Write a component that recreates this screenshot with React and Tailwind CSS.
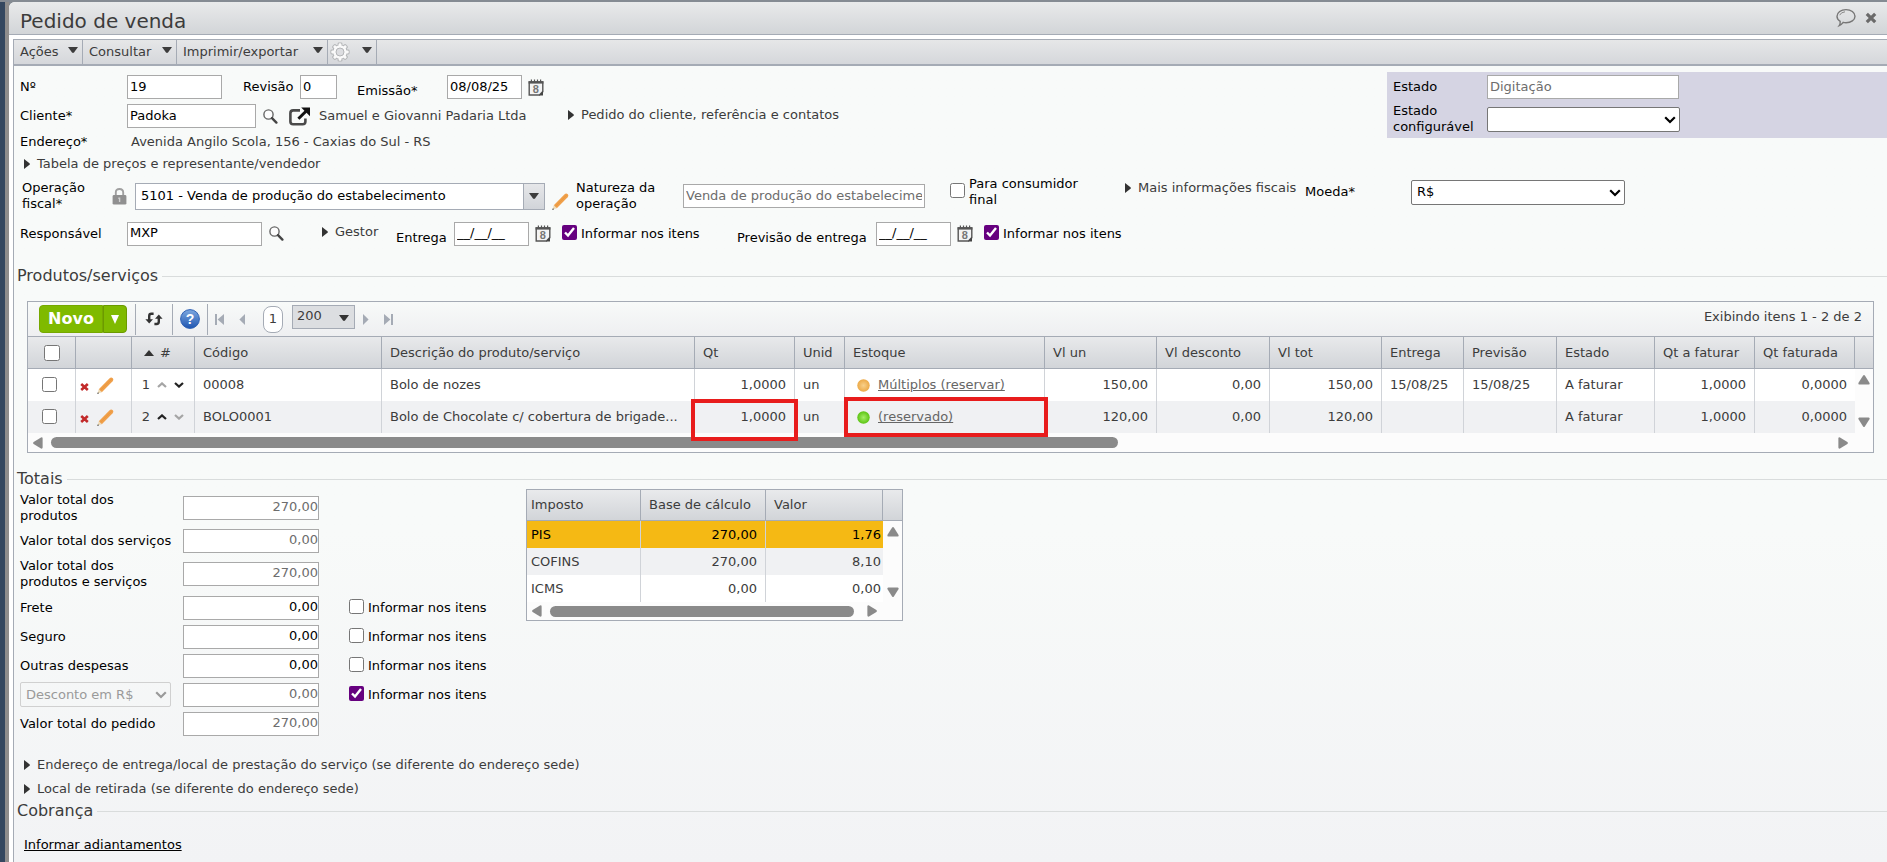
import { useState } from 'react';

const taxes = [
  { name: 'PIS', base: '270,00', value: '1,76' },
  { name: 'COFINS', base: '270,00', value: '8,10' },
  { name: 'ICMS', base: '0,00', value: '0,00' },
];

const items = [
  {
    id: 1, code: '00008', description: 'Bolo de nozes', qty: '1,0000', unit: 'un',
    stock: 'Múltiplos (reservar)', reserved: false, price: '150,00', discount: '0,00', total: '150,00',
    delivery: '15/08/25', forecast: '15/08/25', status: 'A faturar', toBill: '1,0000', billed: '0,0000',
  },
  {
    id: 2, code: 'BOLO0001', description: 'Bolo de Chocolate c/ cobertura de brigade...', qty: '1,0000', unit: 'un',
    stock: '(reservado)', reserved: true, price: '120,00', discount: '0,00', total: '120,00',
    delivery: '', forecast: '', status: 'A faturar', toBill: '1,0000', billed: '0,0000',
  },
];

const columns = [
  ['Código', 'w-[187px]'],
  ['Descrição do produto/serviço', ''],
  ['Qt', 'w-[100px]'],
  ['Unid', 'w-[50px]'],
  ['Estoque', 'w-[200px]'],
  ['Vl un', 'w-[112px]'],
  ['Vl desconto', 'w-[113px]'],
  ['Vl tot', 'w-[112px]'],
  ['Entrega', 'w-[82px]'],
  ['Previsão', 'w-[93px]'],
  ['Estado', 'w-[98px]'],
  ['Qt a faturar', 'w-[100px]'],
  ['Qt faturada', 'w-[100px]'],
];

const totals = [
  { id: 'frete', label: 'Frete', value: '0,00' },
  { id: 'seguro', label: 'Seguro', value: '0,00' },
  { id: 'outras', label: 'Outras despesas', value: '0,00' },
];

/* Icons */
function Down({ className = 'text-[#3c3c3c]' }) {
  return (
    <svg width="10" height="6" viewBox="0 0 10 6" className={className}>
      <path d="M0 0h10L6 5.5Q5 6.3 4 5.5Z" fill="currentColor" />
    </svg>
  );
}

function Right() {
  return (
    <svg width="6" height="10" viewBox="0 0 6 10" className="shrink-0">
      <path d="M0 0L5.5 4.2Q6.2 5 5.5 5.8L0 10Z" fill="#333" />
    </svg>
  );
}

function ScrollArrow({ dir }) {
  const angle = { up: 0, right: 90, down: 180, left: 270 }[dir];
  return (
    <svg width="12" height="12" viewBox="0 0 12 12">
      <path
        d="M5.1 1.6Q6 .4 6.9 1.6L11.6 9Q12 10.6 10.6 10.6H1.4Q0 10.6 .4 9Z"
        fill="#8a8a8a"
        transform={`rotate(${angle} 6 6)`}
      />
    </svg>
  );
}

function SearchIcon() {
  return (
    <svg width="15" height="15" viewBox="0 0 15 15" className="block">
      <circle cx="5.5" cy="5.5" r="4.6" fill="#fdfdfd" stroke="#666" strokeWidth="1.4" />
      <path d="M9 9.2L13.4 13.6" stroke="#444" strokeWidth="2.4" strokeLinecap="round" />
    </svg>
  );
}

function OpenIcon() {
  return (
    <svg width="22" height="19" viewBox="0 0 22 19" className="block">
      <path d="M11 3.4H4.2Q1.4 3.4 1.4 6.2V14.4Q1.4 17.2 4.2 17.2H13.6Q16.4 17.2 16.4 14.4V11.4" fill="none" stroke="#4a4a4a" strokeWidth="2.6" />
      <path d="M9.4 11.8L17 4.2" stroke="#111" strokeWidth="3" />
      <path d="M12.2 .6H21V9.2Z" fill="#111" />
    </svg>
  );
}

function CalendarIcon() {
  return (
    <svg width="16" height="17" viewBox="0 0 16 17" className="block">
      <path d="M1.2 3H14.8V12.6L11.4 16H1.2Z" fill="#f4f4f4" stroke="#555" strokeWidth="1.4" />
      <path d="M.6 2.2H15.4V4.6H.6Z" fill="#555" />
      <path d="M3.4 .4V3M6.5 .4V3M9.5 .4V3M12.6 .4V3" stroke="#555" strokeWidth="1.2" />
      <path d="M15 12L11 16.4H15Z" fill="#444" />
      <text x="7.8" y="13.6" textAnchor="middle" fontSize="11" fontWeight="bold" fill="#777" fontFamily="Liberation Sans, sans-serif">8</text>
    </svg>
  );
}

function PencilIcon() {
  return (
    <svg width="17" height="17" viewBox="0 0 17 17" className="block">
      <path d="M1.8 12.2L12.6 1.2Q14.2 -.2 15.8 1.2Q17 2.6 15.6 4.2L4.8 15.2Z" fill="#f0a04a" />
      <path d="M3.2 13.6L14.6 2.2" stroke="#ea973f" strokeWidth="1" />
      <path d="M1.8 12.2L4.8 15.2L.6 16.6Z" fill="#ecd9b5" />
      <path d="M.9 15.2L2.1 16.2L.2 16.9Z" fill="#333" />
    </svg>
  );
}

function LockIcon() {
  return (
    <svg width="15" height="17" viewBox="0 0 15 17" className="shrink-0">
      <path d="M3.8 8V4.6Q3.8 1 7.5 1Q11.2 1 11.2 4.6V8" fill="none" stroke="#a0a0a0" strokeWidth="1.9" />
      <rect x=".6" y="7" width="13.8" height="9.6" rx="1.4" fill="#909090" />
      <path d="M6.3 9.6H8.3V14H6.9V11H6.3Z" fill="#d0d0d0" />
    </svg>
  );
}

function GearIcon() {
  const teeth = [0, 45, 90, 135, 180, 225, 270, 315];
  return (
    <svg width="20" height="20" viewBox="0 0 20 20">
      {teeth.map(a => (
        <rect key={a} x="7.6" y=".4" width="4.8" height="5" rx="1.4" fill="#b4b6b8" transform={`rotate(${a} 10 10)`} />
      ))}
      <circle cx="10" cy="10" r="7.6" fill="#b4b6b8" />
      {teeth.map(a => (
        <rect key={a} x="8.6" y="1.3" width="2.8" height="5" rx="1" fill="#fafafa" transform={`rotate(${a} 10 10)`} />
      ))}
      <circle cx="10" cy="10" r="6.7" fill="#fafafa" />
      <circle cx="10" cy="10" r="4" fill="#dddee1" stroke="#b4b6b8" />
    </svg>
  );
}

function RefreshIcon() {
  return (
    <svg width="18" height="14" viewBox="0 0 18 14">
      <path d="M8.6 1.8H6.4Q4.2 1.8 4.2 4V8.4" fill="none" stroke="#333" strokeWidth="2.4" />
      <path d="M.4 7.2H8L4.2 11.6Z" fill="#333" />
      <path d="M9.4 12H11.6Q13.8 12 13.8 9.8V5.6" fill="none" stroke="#333" strokeWidth="2.4" />
      <path d="M10 6.8H17.6L13.8 2.4Z" fill="#333" />
    </svg>
  );
}

function HelpIcon() {
  return (
    <svg width="20" height="20" viewBox="0 0 20 20">
      <defs>
        <linearGradient id="help" x1="0" y1="0" x2="0" y2="1">
          <stop offset="0" stopColor="#7fa9e0" />
          <stop offset="1" stopColor="#1f55b0" />
        </linearGradient>
      </defs>
      <circle cx="10" cy="10" r="9.4" fill="url(#help)" stroke="#2f62b5" />
      <text x="10" y="15" textAnchor="middle" fontSize="14" fontWeight="bold" fill="#fff" fontFamily="Liberation Sans, sans-serif">?</text>
    </svg>
  );
}

function PagerIcon({ flip, bar }) {
  return (
    <svg width="9" height="11" viewBox="0 0 9 11" className={flip ? 'rotate-180' : ''}>
      {bar && <rect x="0" y="0" width="2" height="11" fill="#a5abb5" />}
      <path d={bar ? 'M9 0V11L2.6 5.5Z' : 'M7 0V11L1.4 5.5Z'} fill="#a5abb5" />
    </svg>
  );
}

function Chevron({ down, strong }) {
  return (
    <svg width="10" height="6" viewBox="0 0 10 6" className={strong ? 'text-[#222]' : 'text-[#a5a5a5]'}>
      <path d={down ? 'M1 1L5 4.6L9 1' : 'M1 5L5 1.4L9 5'} fill="none" stroke="currentColor" strokeWidth="2.2" />
    </svg>
  );
}

/* Form parts */
function Field({ className = '', ...props }) {
  return (
    <input
      type="text"
      className={`h-6 shrink-0 border border-[#a9a9a9] bg-white px-0.5 pb-0.5 text-black disabled:text-[#6d6d6d] ${className}`}
      {...props}
    />
  );
}

function Select({ className = '', children, ...props }) {
  return (
    <span className={`relative shrink-0 text-black has-disabled:text-[#9a9a9a] ${className}`}>
      <select
        className="block h-[25px] w-full appearance-none rounded-xs border border-[#767676] bg-white pl-[5px] disabled:border-[#d0d0d0] disabled:bg-transparent"
        {...props}
      >
        {children}
      </select>
      <svg width="12" height="8" viewBox="0 0 12 8" className="pointer-events-none absolute right-1 top-[9px]">
        <path d="M1.2 1.2L6 6L10.8 1.2" fill="none" stroke="currentColor" strokeWidth="2.2" />
      </svg>
    </span>
  );
}

function Label({ low, className = '', ...props }) {
  return <label className={`shrink-0 leading-4 text-black ${low ? 'pt-2' : ''} ${className}`} {...props} />;
}

function Check({ id, label, checked = false, className = '' }) {
  const [on, setOn] = useState(checked);
  return (
    <span className={`flex shrink-0 items-center gap-1 ${className}`}>
      <input id={id} type="checkbox" checked={on} onChange={e => setOn(e.target.checked)} className="mb-[3px] size-[15px] shrink-0 accent-[#66007f]" />
      <label htmlFor={id} className="leading-4 text-black">{label}</label>
    </span>
  );
}

function Expander({ children, className = '' }) {
  return (
    <button className={`flex shrink-0 items-center gap-[7px] whitespace-nowrap ${className}`}>
      <Right />
      {children}
    </button>
  );
}

function IconButton({ label, children, className = '' }) {
  return <button aria-label={label} className={`shrink-0 ${className}`}>{children}</button>;
}

function Legend({ children }) {
  return (
    <h2 className="flex h-5 items-center gap-1 pl-[3px] text-base">
      {children}
      <span className="h-px flex-1 bg-[#d9dcdc]" />
    </h2>
  );
}

function MenuButton({ children, className }) {
  return (
    <button className={`flex items-center justify-between border-r border-[#a5abb5] pl-1.5 pr-1 ${className}`}>
      {children}
      <Down className="mb-1 text-[#3c3c3c]" />
    </button>
  );
}

function OrderHeader() {
  return (
    <div>
      <div className="flex pt-1.5">
        <div className="flex-1 pl-1.5 pt-[3px]">
          <div className="flex h-6 items-center">
            <Label htmlFor="numero" className="w-[107px]">Nº</Label>
            <Field id="numero" defaultValue="19" className="w-[95px]" />
            <Label htmlFor="revisao" className="ml-[21px] w-[57px]">Revisão</Label>
            <Field id="revisao" defaultValue="0" className="w-[37px]" />
            <Label low htmlFor="emissao" className="ml-5 w-[90px]">Emissão*</Label>
            <Field id="emissao" defaultValue="08/08/25" className="w-[75px]" />
            <IconButton label="Calendário" className="ml-1.5"><CalendarIcon /></IconButton>
          </div>
          <div className="mt-[5px] flex h-6 items-center">
            <Label htmlFor="cliente" className="w-[107px]">Cliente*</Label>
            <Field id="cliente" defaultValue="Padoka" className="w-[129px]" />
            <IconButton label="Pesquisar cliente" className="ml-[7px]"><SearchIcon /></IconButton>
            <IconButton label="Abrir cliente" className="ml-[11px]"><OpenIcon /></IconButton>
            <span className="ml-2 w-[249px]">Samuel e Giovanni Padaria Ltda</span>
            <Expander className="pb-0.5">Pedido do cliente, referência e contatos</Expander>
          </div>
          <div className="mt-1 flex h-5 items-center">
            <span className="w-[111px] text-black">Endereço*</span>
            <span>Avenida Angilo Scola, 156 - Caxias do Sul - RS</span>
          </div>
          <Expander className="ml-1 h-6">Tabela de preços e representante/vendedor</Expander>
        </div>
        <div className="h-[66px] w-[500px] bg-[#d5d4e3] px-1.5 pt-[3px]">
          <div className="flex h-6 items-center">
            <Label htmlFor="estado" className="w-[94px]">Estado</Label>
            <Field id="estado" disabled defaultValue="Digitação" className="w-[192px]" />
          </div>
          <div className="mt-1 flex h-8 items-center">
            <Label htmlFor="configuravel" className="w-[94px]">Estado configurável</Label>
            <Select id="configuravel" className="w-[193px]">
              <option></option>
            </Select>
          </div>
        </div>
      </div>

      <div className="flex h-10 items-center pl-2">
        <Label htmlFor="operacao" className="w-[90px]">Operação<br />fiscal*</Label>
        <LockIcon />
        <div className="ml-2 flex h-[27px] w-[410px] shrink-0 border border-[#a5abb5] bg-white">
          <input id="operacao" defaultValue="5101 - Venda de produção do estabelecimento" className="min-w-0 flex-1 px-[5px] text-black" />
          <button aria-label="Abrir lista" className="flex w-[21px] items-center justify-center border-l border-[#a5abb5] bg-linear-to-b from-[#e6e7e9] to-[#d1d4d9]">
            <Down />
          </button>
        </div>
        <IconButton label="Editar operação" className="ml-[7px] pt-2.5"><PencilIcon /></IconButton>
        <Label htmlFor="natureza" className="ml-[7px] w-[107px]">Natureza da operação</Label>
        <Field id="natureza" disabled defaultValue="Venda de produção do estabelecimento" className="w-[242px]" />
        <div className="flex items-center pb-2">
          <Check id="consumidor" label={<>Para consumidor<br />final</>} className="ml-[25px] w-[175px]" />
          <Expander className="w-[180px] pb-2">Mais informações fiscais</Expander>
          <Label htmlFor="moeda" className="w-[106px]">Moeda*</Label>
          <Select id="moeda" className="w-[214px]">
            <option>R$</option>
          </Select>
        </div>
      </div>

      <div className="mt-[5px] flex h-[25px] items-center pl-1.5">
        <Label htmlFor="responsavel" className="w-[107px]">Responsável</Label>
        <Field id="responsavel" defaultValue="MXP" className="w-[135px]" />
        <IconButton label="Pesquisar responsável" className="ml-[7px]"><SearchIcon /></IconButton>
        <Expander className="ml-[38px] w-[74px] pb-1">Gestor</Expander>
        <Label low htmlFor="entrega" className="w-[58px]">Entrega</Label>
        <Field id="entrega" defaultValue="__/__/__" className="w-[75px]" />
        <IconButton label="Calendário" className="ml-1.5"><CalendarIcon /></IconButton>
        <Check id="entrega-itens" checked label="Informar nos itens" className="ml-[11px] w-[175px]" />
        <Label low htmlFor="previsao" className="w-[139px]">Previsão de entrega</Label>
        <Field id="previsao" defaultValue="__/__/__" className="w-[75px]" />
        <IconButton label="Calendário" className="ml-1.5"><CalendarIcon /></IconButton>
        <Check id="previsao-itens" checked label="Informar nos itens" className="ml-[11px]" />
      </div>
    </div>
  );
}

function Toolbar() {
  return (
    <div className="flex h-[34px] items-center bg-linear-to-b from-[#f8faf9] to-[#eeeff1]">
      <div className="ml-[11px] flex h-7 text-base font-bold text-white">
        <button className="w-16 rounded-l-sm border border-[#76a800] bg-[#7fba00]">Novo</button>
        <button aria-label="Mais opções" className="flex w-6 items-center justify-center rounded-r-sm border border-[#6b9a00] bg-[#7fba00]">
          <svg width="8" height="9" viewBox="0 0 8 9"><path d="M0 0H8L4 9Z" fill="#fff" /></svg>
        </button>
      </div>
      <div className="ml-2 flex h-[31px] items-center">
        <button aria-label="Atualizar" className="flex h-full w-[37px] items-center justify-center border-l border-[#a5abb5]"><RefreshIcon /></button>
        <button aria-label="Ajuda" className="flex h-full w-[36px] items-center justify-center border-x border-[#a5abb5]"><HelpIcon /></button>
      </div>
      <button aria-label="Primeira página" className="ml-[7px]"><PagerIcon bar /></button>
      <button aria-label="Página anterior" className="ml-[14px]"><PagerIcon /></button>
      <span className="ml-4 flex h-[27px] w-5 items-center justify-center rounded-lg border border-[#a5abb5] bg-white">1</span>
      <div className="relative mb-1 ml-[9px]">
        <select aria-label="Itens por página" className="block h-6 w-[63px] appearance-none border border-[#a5abb5] bg-[#dcdee1] pb-0.5 pl-1">
          <option>200</option>
        </select>
        <Down className="pointer-events-none absolute right-1.5 top-2.5 text-[#333]" />
      </div>
      <button aria-label="Próxima página" className="ml-1.5"><PagerIcon flip /></button>
      <button aria-label="Última página" className="ml-[14px]"><PagerIcon flip bar /></button>
      <span className="ml-auto pb-1 pr-[11px]">Exibindo itens 1 - 2 de 2</span>
    </div>
  );
}

function ItemsGrid() {
  const td = 'border-r border-[#d0d3d8] px-2';
  return (
    <div className="mx-[13px] mt-[15px] border border-[#a5abb5] bg-[#fcfcfc]">
      <Toolbar />
      <table className="w-full table-fixed border-separate border-spacing-0 whitespace-nowrap">
        <thead>
          <tr className="h-[33px] bg-linear-to-b from-[#e9eaec] to-[#d1d4d8] text-left [&>th]:border-y [&>th]:border-r [&>th]:border-[#a5abb5] [&>th]:px-2 [&>th]:font-normal">
            <th className="w-12">
              <input type="checkbox" aria-label="Selecionar todos" className="ml-2 block size-4" />
            </th>
            <th className="w-14"></th>
            <th className="w-[63px]">
              <span className="flex items-center gap-1.5 pl-1">
                <svg width="10" height="6" viewBox="0 0 10 6"><path d="M0 6L5 0L10 6Z" fill="#333" /></svg>
                #
              </span>
            </th>
            {columns.map(([title, width]) => <th key={title} className={width}>{title}</th>)}
            <th className="w-[18px] border-r-0!"></th>
          </tr>
        </thead>
        <tbody>
          {items.map((item, index) => (
            <tr key={item.id} className="h-8 odd:bg-white even:bg-[#f0f1f3]">
              <td className={td}><input type="checkbox" aria-label={`Selecionar item ${item.id}`} className="mb-0.5 ml-1.5 block size-[15px]" /></td>
              <td className={td}>
                <span className="flex items-center gap-2 -ml-1">
                  <button aria-label="Excluir">
                    <svg width="9" height="8" viewBox="0 0 9 8" className="mt-1 block"><path d="M1.2 1L7.8 7M7.8 1L1.2 7" stroke="#c22a2a" strokeWidth="2.6" /></svg>
                  </button>
                  <button aria-label="Editar"><PencilIcon /></button>
                </span>
              </td>
              <td className={td}>
                <span className="flex items-center justify-center gap-[7px]">
                  {item.id}
                  <Chevron strong={index > 0} />
                  <Chevron down strong={index === 0} />
                </span>
              </td>
              <td className={td}>{item.code}</td>
              <td className={td}>{item.description}</td>
              <td className={`relative text-right ${td}`}>
                {item.qty}
                {item.reserved && <span className="pointer-events-none absolute -bottom-2 -left-1 -right-1 -top-0.5 z-10 border-4 border-[#e81c1c]" />}
              </td>
              <td className={td}>{item.unit}</td>
              <td className={`relative ${td}`}>
                <span className="flex items-center gap-2 pl-1">
                  <svg width="13" height="13" viewBox="0 0 13 13">
                    <defs>
                      <radialGradient id={`stock${item.id}`}>
                        <stop offset="0" stopColor={item.reserved ? '#a5ee66' : '#f8d08a'} />
                        <stop offset="1" stopColor={item.reserved ? '#5cc414' : '#ecaa48'} />
                      </radialGradient>
                    </defs>
                    <circle cx="6.5" cy="6.5" r="6.2" fill={`url(#stock${item.id})`} />
                  </svg>
                  <a href="#estoque" className="text-[#666] underline">{item.stock}</a>
                </span>
                {item.reserved && <span className="pointer-events-none absolute -bottom-1 -left-px -right-1 -top-1 z-10 border-4 border-[#e81c1c]" />}
              </td>
              <td className={`text-right ${td}`}>{item.price}</td>
              <td className={`text-right ${td}`}>{item.discount}</td>
              <td className={`text-right ${td}`}>{item.total}</td>
              <td className={td}>{item.delivery}</td>
              <td className={td}>{item.forecast}</td>
              <td className={td}>{item.status}</td>
              <td className={`text-right ${td}`}>{item.toBill}</td>
              <td className="px-2 text-right">{item.billed}</td>
              {index === 0 && (
                <td rowSpan={2} className="bg-[#fcfcfc]">
                  <span className="flex h-16 flex-col items-center justify-between py-[5px]">
                    <ScrollArrow dir="up" />
                    <ScrollArrow dir="down" />
                  </span>
                </td>
              )}
            </tr>
          ))}
        </tbody>
      </table>
      <div className="flex h-[19px] items-center pl-1 pr-6">
        <ScrollArrow dir="left" />
        <div className="mx-[7px] flex-1"><div className="h-[11px] w-3/5 rounded-full bg-[#8a8a8a]" /></div>
        <ScrollArrow dir="right" />
      </div>
    </div>
  );
}

function TaxTable() {
  return (
    <div className="w-[377px] self-start border border-[#a5abb5] bg-[#fcfcfc]">
      <table className="w-full table-fixed border-separate border-spacing-0">
        <thead>
          <tr className="h-[31px] bg-linear-to-b from-[#e9eaec] to-[#d1d4d8] text-left [&>th]:border-b [&>th]:border-r [&>th]:border-[#a5abb5] [&>th]:font-normal">
            <th className="w-[114px] pl-1">Imposto</th>
            <th className="w-[125px] pl-2">Base de cálculo</th>
            <th className="pl-2">Valor</th>
            <th className="w-[19px] border-r-0!"></th>
          </tr>
        </thead>
        <tbody>
          {taxes.map((tax, index) => (
            <tr key={tax.name} className="h-[27px] bg-white first:bg-[#f5b914] first:text-black even:bg-[#f0f1f3]">
              <td className="border-r border-[#d0d3d8] pl-1">{tax.name}</td>
              <td className="border-r border-[#d0d3d8] pr-2 text-right">{tax.base}</td>
              <td className="pr-0.5 text-right">{tax.value}</td>
              {index === 0 && (
                <td rowSpan={3} className="bg-[#fcfcfc]">
                  <span className="flex h-20 flex-col items-center justify-between py-1">
                    <ScrollArrow dir="up" />
                    <ScrollArrow dir="down" />
                  </span>
                </td>
              )}
            </tr>
          ))}
        </tbody>
      </table>
      <div className="flex h-[18px] items-center pl-1 pr-6">
        <ScrollArrow dir="left" />
        <div className="ml-[7px] mr-3 h-[11px] flex-1 rounded-full bg-[#8a8a8a]" />
        <ScrollArrow dir="right" />
      </div>
    </div>
  );
}

function Totals() {
  const amount = 'w-[136px] pr-0! text-right';
  return (
    <div className="flex">
      <div className="w-[512px] shrink-0 pl-1.5 pt-0.5">
        <div className="flex h-[33px] items-center">
          <Label htmlFor="total-produtos" className="w-[163px]">Valor total dos<br />produtos</Label>
          <Field id="total-produtos" disabled defaultValue="270,00" className={amount} />
        </div>
        <div className="flex h-[33px] items-center">
          <Label htmlFor="total-servicos" className="w-[163px]">Valor total dos serviços</Label>
          <Field id="total-servicos" disabled defaultValue="0,00" className={amount} />
        </div>
        <div className="mb-[3px] flex h-[33px] items-center">
          <Label htmlFor="total-geral" className="w-[163px]">Valor total dos<br />produtos e serviços</Label>
          <Field id="total-geral" disabled defaultValue="270,00" className={amount} />
        </div>
        {totals.map(row => (
          <div key={row.id} className="flex h-[29px] items-center">
            <Label htmlFor={row.id} className="w-[163px]">{row.label}</Label>
            <Field id={row.id} defaultValue={row.value} className={amount} />
            <Check id={`${row.id}-itens`} label="Informar nos itens" className="ml-[30px]" />
          </div>
        ))}
        <div className="flex h-[29px] items-center">
          <Select aria-label="Tipo de desconto" disabled className="mr-3 w-[151px]">
            <option>Desconto em R$</option>
          </Select>
          <Field aria-label="Desconto" disabled defaultValue="0,00" className={amount} />
          <Check id="desconto-itens" checked label="Informar nos itens" className="ml-[30px]" />
        </div>
        <div className="flex h-[29px] items-center">
          <Label htmlFor="total-pedido" className="w-[163px]">Valor total do pedido</Label>
          <Field id="total-pedido" disabled defaultValue="270,00" className={amount} />
        </div>
      </div>
      <TaxTable />
    </div>
  );
}

function App() {
  return (
    <div className="flex min-h-screen overflow-hidden bg-[#858b93] pt-0.5 font-['DejaVu_Sans',sans-serif] text-[13px] text-[#3c3c3c]">
      <div className="w-[9px] shrink-0 bg-linear-to-r from-[#34475f] from-50% to-[#8f8d8c] to-60%" />
      <div className="flex min-w-0 flex-1 flex-col rounded-tl-md bg-white">
        <header className="flex h-[33px] items-center justify-between rounded-tl-md border-b border-[#a5abb5] bg-linear-to-b from-[#e9eaeb] to-[#d2d5d8] pl-[11px] pr-2.5">
          <h1 className="pt-1.5 text-xl">Pedido de venda</h1>
          <div className="flex items-center gap-2">
            <button aria-label="Comentários">
              <svg width="22" height="20" viewBox="0 0 22 20" className="block">
                <path d="M11 1.6C16 1.6 20 4.4 20 8.2S16 14.8 11 14.8Q9.6 14.8 8.2 14.4Q6.6 16.6 4.2 17.6Q5.4 15.8 5.2 13.4Q2 11.4 2 8.2C2 4.4 6 1.6 11 1.6Z" fill="none" stroke="#777" strokeWidth="1.4" />
                <path d="M4.6 7.2Q6 4.2 10 3.8" fill="none" stroke="#888" />
              </svg>
            </button>
            <button aria-label="Fechar">
              <svg width="12" height="12" viewBox="0 0 12 12" className="block">
                <path d="M1.8 1.8L10.2 10.2M10.2 1.8L1.8 10.2" stroke="#6a6a6a" strokeWidth="3.2" />
              </svg>
            </button>
          </div>
        </header>
        <div className="flex flex-1 flex-col pl-1 pt-1">
          <main className="flex-1 border-l border-t border-[#a5abb5] bg-linear-to-b from-[#f8faf9] from-60% to-[#f2f3f5]">
            <nav className="flex h-[26px] items-stretch border-b-2 border-[#a5abb5] bg-linear-to-b from-[#e6e7e8] to-[#d5d7db]">
              <MenuButton className="w-[69px]">Ações</MenuButton>
              <MenuButton className="w-[94px]">Consultar</MenuButton>
              <MenuButton className="w-[151px]">Imprimir/exportar</MenuButton>
              <button aria-label="Configurações" className="flex w-[49px] items-center justify-between border-r border-[#a5abb5] pl-0.5 pr-1">
                <GearIcon />
                <Down className="mb-1 text-[#3c3c3c]" />
              </button>
            </nav>
            <OrderHeader />
            <section className="mt-5">
              <Legend>Produtos/serviços</Legend>
              <ItemsGrid />
            </section>
            <section className="mt-4">
              <Legend>Totais</Legend>
              <Totals />
            </section>
            <div className="mt-[15px] flex flex-col items-start pl-2.5">
              <Expander className="h-6">Endereço de entrega/local de prestação do serviço (se diferente do endereço sede)</Expander>
              <Expander className="h-6">Local de retirada (se diferente do endereço sede)</Expander>
            </div>
            <section>
              <Legend>Cobrança</Legend>
              <a href="#adiantamentos" className="ml-2.5 mt-3.5 inline-block text-black underline">Informar adiantamentos</a>
            </section>
          </main>
        </div>
      </div>
    </div>
  );
}

export default App;
